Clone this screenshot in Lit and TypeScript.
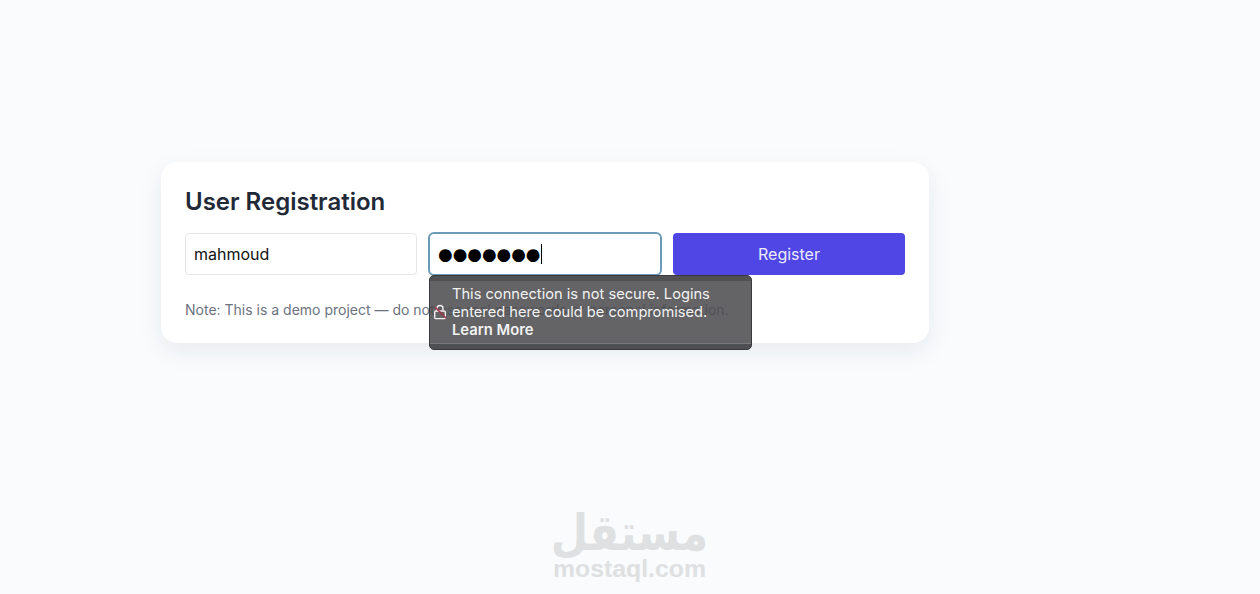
import { LitElement, html, css } from 'lit';
import { customElement } from 'lit/decorators.js';

@customElement('app-root')
class AppRoot extends LitElement {
  static styles = css`
    :host {
      display: block;
      height: 594px;
      overflow: hidden;
      background: #f9fbfd;
      font-family: Inter, "Liberation Sans", sans-serif;
      position: relative;
    }

    .page {
      padding: 162px 0 0 161px;
    }

    .card {
      box-sizing: border-box;
      width: 768px;
      height: 181px;
      padding: 24px;
      background: #fff;
      border-radius: 16px;
      box-shadow: 0 8px 24px rgba(31, 41, 55, 0.08);
    }

    h1 {
      margin: 0 0 16px;
      font-size: 24px;
      line-height: 31px;
      font-weight: 600;
      color: #1f2937;
    }

    .row {
      display: grid;
      grid-template-columns: repeat(3, 1fr);
      gap: 12px;
      height: 42px;
    }

    input {
      box-sizing: border-box;
      width: 100%;
      height: 42px;
      padding: 0 8px;
      border: 1px solid #e5e7eb;
      border-radius: 4px;
      outline: none;
      background: #fff;
      color: #111;
      font: 16px Inter, sans-serif;
    }

    .password {
      position: relative;
    }

    .field {
      box-sizing: border-box;
      height: 44px;
      margin: -1px;
      padding: 0 8px;
      display: flex;
      align-items: center;
      border: 2px solid #6b9bb8;
      border-radius: 6px;
      background: #fff;
    }

    .dots {
      font: 16.8px/1 "DejaVu Sans", sans-serif;
      color: #000;
      white-space: nowrap;
    }

    .caret {
      width: 1px;
      height: 20px;
      background: #000;
    }

    button {
      height: 42px;
      border: none;
      border-radius: 4px;
      background: #4f46e5;
      color: #ece9fd;
      font: 16px Inter, sans-serif;
    }

    .note {
      margin: 24px 0 0;
      font-size: 14px;
      line-height: 22px;
      color: #6b7280;
      white-space: nowrap;
    }

    .tooltip {
      position: absolute;
      left: 0;
      top: 42px;
      box-sizing: border-box;
      width: 323px;
      height: 75px;
      padding: 5px 0;
      border: 1px solid #3a3a3d;
      border-radius: 5px;
      background: rgba(50, 50, 54, 0.85);
      color: #f2f2f2;
    }

    .tip-body {
      box-sizing: border-box;
      height: 63px;
      display: flex;
      align-items: center;
      gap: 5px;
      padding: 0 0 1px 3px;
      background: rgba(255, 255, 255, 0.11);
      border-bottom: 1px solid rgba(255, 255, 255, 0.15);
      font-size: 14.65px;
      line-height: 18px;
      white-space: nowrap;
    }

    .tip-body b {
      font-size: 14.8px;
      font-weight: 600;
    }

    .tip-body svg {
      flex: none;
    }

    .mark {
      position: absolute;
      left: 553px;
      top: 511px;
      width: 153px;
      color: #dfe0e1;
    }

    .mark .ar {
      display: flex;
      justify-content: center;
      height: 45px;
      font: 700 50px/45px "DejaVu Sans", sans-serif;
      white-space: nowrap;
      transform: scaleX(0.86);
    }

    .mark .en {
      text-align: center;
      font: 700 24.8px/26px "Liberation Sans", sans-serif;
    }
  `;

  render() {
    return html`
      <div class="page">
        <div class="card">
          <h1>User Registration</h1>
          <div class="row">
            <input type="text" .value=${'mahmoud'} />
            <div class="password">
              <div class="field"><span class="dots">●●●●●●●</span><span class="caret"></span></div>
              <div class="tooltip">
                <div class="tip-body">
                  <svg width="14" height="16" viewBox="0 0 14 16" fill="none">
                    <path d="M4 7V4.5a3 3 0 0 1 6 0V6" stroke="#f4eeee" stroke-width="1.4" />
                    <rect x="1.7" y="7" width="10.6" height="7.6" rx="1.2" stroke="#f4eeee" stroke-width="1.4" />
                    <path d="M2 3l11 11" stroke="#a8324e" stroke-width="1.6" />
                  </svg>
                  <div>This connection is not secure. Logins<br />entered here could be compromised.<br /><b>Learn More</b></div>
                </div>
              </div>
            </div>
            <button>Register</button>
          </div>
          <p class="note">Note: This is a demo project — do not use real passwords or personal information.</p>
        </div>
      </div>
      <div class="mark">
        <div class="ar" dir="rtl" lang="ar">مستقل</div>
        <div class="en">mostaql.com</div>
      </div>
    `;
  }
}
